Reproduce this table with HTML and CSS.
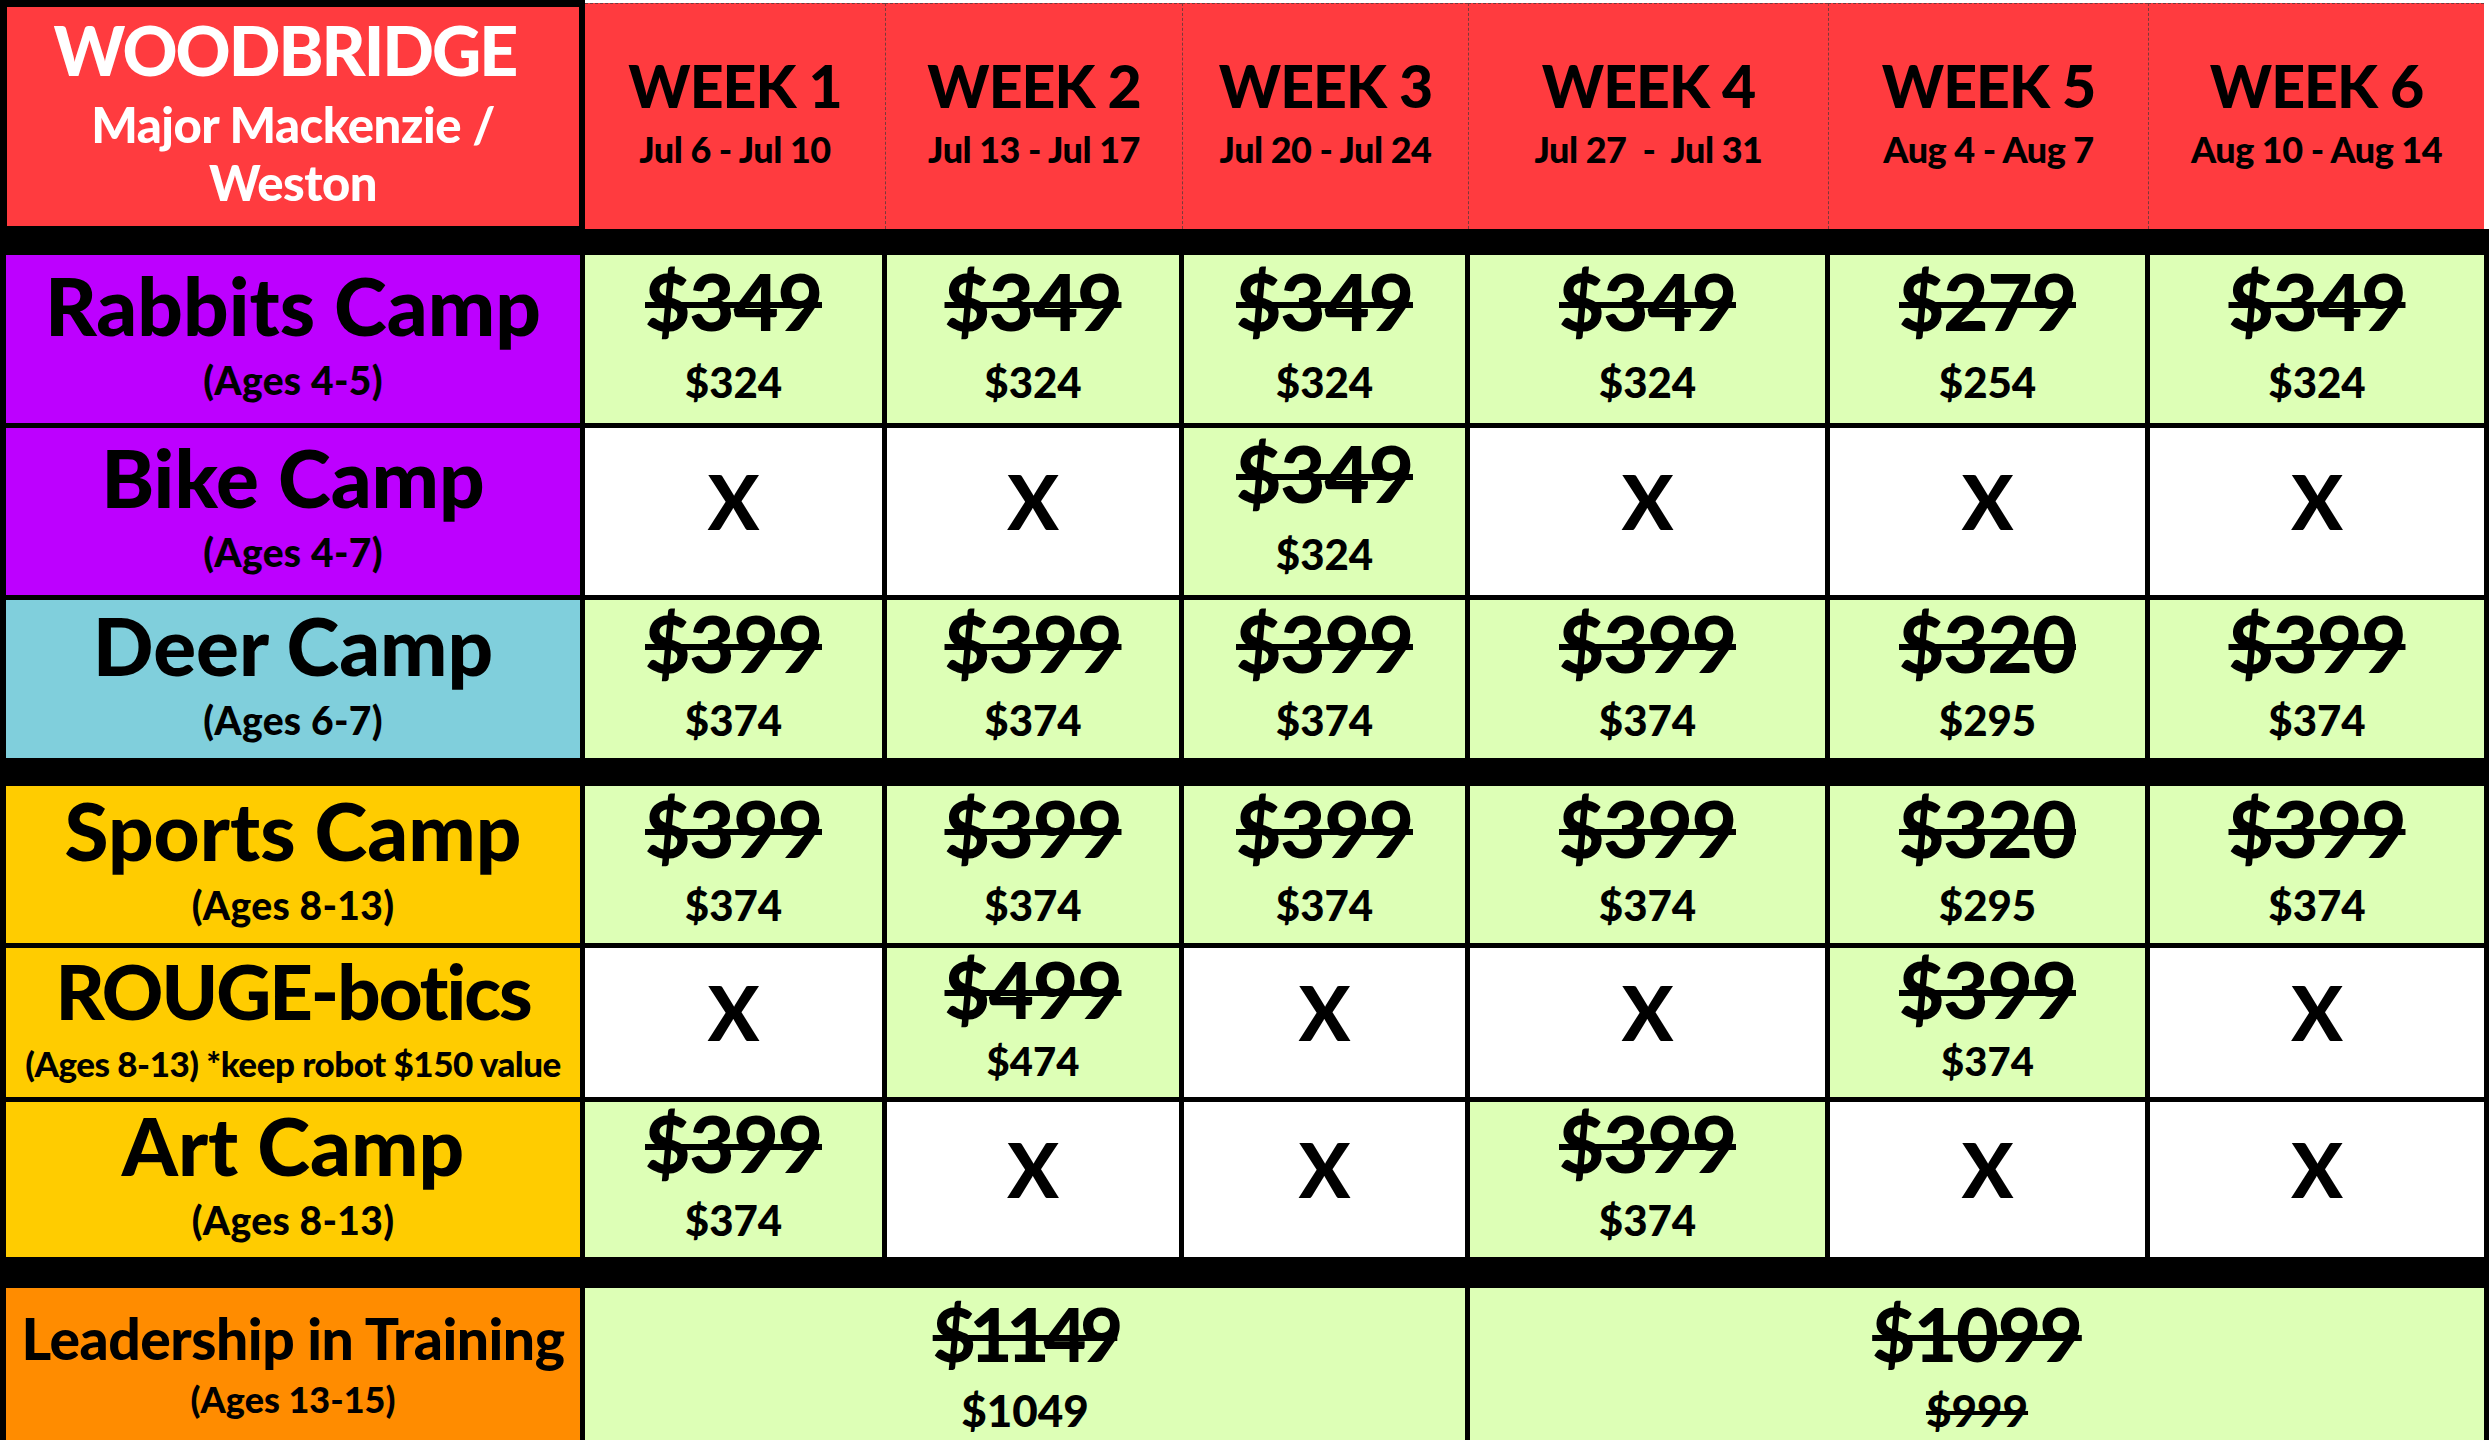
FILE: index.html
```html
<!DOCTYPE html>
<html>
<head>
<meta charset="utf-8">
<link rel="stylesheet" href="styles.css">
</head>
<body>
<div class="sheet">
  <div class="head">
    <div class="corner">
      <div class="corner-in">
        <div class="city">WOODBRIDGE</div>
        <div class="loc first">Major Mackenzie /</div>
        <div class="loc">Weston</div>
      </div>
    </div>
    <div class="wk first"><div class="wk-t">WEEK 1</div><div class="wk-d">Jul 6 - Jul 10</div></div>
    <div class="wk"><div class="wk-t">WEEK 2</div><div class="wk-d">Jul 13 - Jul 17</div></div>
    <div class="wk"><div class="wk-t">WEEK 3</div><div class="wk-d">Jul 20 - Jul 24</div></div>
    <div class="wk"><div class="wk-t">WEEK 4</div><div class="wk-d">Jul 27&nbsp; - &nbsp;Jul 31</div></div>
    <div class="wk"><div class="wk-t">WEEK 5</div><div class="wk-d">Aug 4 - Aug 7</div></div>
    <div class="wk"><div class="wk-t">WEEK 6</div><div class="wk-d">Aug 10 - Aug 14</div></div>
  </div>

  <div class="band b1"></div>

  <div class="grid g1">
    <div class="lbl purple"><div class="name">Rabbits Camp</div><div class="ages">(Ages 4-5)</div></div>
    <div class="c on tall"><div class="old">$349</div><div class="new">$324</div></div>
    <div class="c on tall"><div class="old">$349</div><div class="new">$324</div></div>
    <div class="c on tall"><div class="old">$349</div><div class="new">$324</div></div>
    <div class="c on tall"><div class="old">$349</div><div class="new">$324</div></div>
    <div class="c on tall"><div class="old">$279</div><div class="new">$254</div></div>
    <div class="c on tall"><div class="old">$349</div><div class="new">$324</div></div>

    <div class="lbl purple"><div class="name">Bike Camp</div><div class="ages">(Ages 4-7)</div></div>
    <div class="c off"><div class="x">X</div></div>
    <div class="c off"><div class="x">X</div></div>
    <div class="c on tall"><div class="old">$349</div><div class="new">$324</div></div>
    <div class="c off"><div class="x">X</div></div>
    <div class="c off"><div class="x">X</div></div>
    <div class="c off"><div class="x">X</div></div>

    <div class="lbl blue"><div class="name">Deer Camp</div><div class="ages">(Ages 6-7)</div></div>
    <div class="c on"><div class="old">$399</div><div class="new">$374</div></div>
    <div class="c on"><div class="old">$399</div><div class="new">$374</div></div>
    <div class="c on"><div class="old">$399</div><div class="new">$374</div></div>
    <div class="c on"><div class="old">$399</div><div class="new">$374</div></div>
    <div class="c on"><div class="old">$320</div><div class="new">$295</div></div>
    <div class="c on"><div class="old">$399</div><div class="new">$374</div></div>
  </div>

  <div class="band b2"></div>

  <div class="grid g2">
    <div class="lbl yellow"><div class="name">Sports Camp</div><div class="ages">(Ages 8-13)</div></div>
    <div class="c on"><div class="old">$399</div><div class="new">$374</div></div>
    <div class="c on"><div class="old">$399</div><div class="new">$374</div></div>
    <div class="c on"><div class="old">$399</div><div class="new">$374</div></div>
    <div class="c on"><div class="old">$399</div><div class="new">$374</div></div>
    <div class="c on"><div class="old">$320</div><div class="new">$295</div></div>
    <div class="c on"><div class="old">$399</div><div class="new">$374</div></div>

    <div class="lbl yellow"><div class="name robo">ROUGE-botics</div><div class="ages small">(Ages 8-13) *keep robot $150 value</div></div>
    <div class="c off"><div class="x">X</div></div>
    <div class="c on tight"><div class="old">$499</div><div class="new">$474</div></div>
    <div class="c off"><div class="x">X</div></div>
    <div class="c off"><div class="x">X</div></div>
    <div class="c on tight"><div class="old">$399</div><div class="new">$374</div></div>
    <div class="c off"><div class="x">X</div></div>

    <div class="lbl yellow"><div class="name">Art Camp</div><div class="ages">(Ages 8-13)</div></div>
    <div class="c on"><div class="old">$399</div><div class="new">$374</div></div>
    <div class="c off"><div class="x">X</div></div>
    <div class="c off"><div class="x">X</div></div>
    <div class="c on"><div class="old">$399</div><div class="new">$374</div></div>
    <div class="c off"><div class="x">X</div></div>
    <div class="c off"><div class="x">X</div></div>
  </div>

  <div class="band b3"></div>

  <div class="grid g3">
    <div class="lbl orange"><div class="name lit">Leadership in Training</div><div class="ages lit-ages">(Ages 13-15)</div></div>
    <div class="c on span3"><div class="old big ones">$1149</div><div class="new big">$1049</div></div>
    <div class="c on span3"><div class="old big">$1099</div><div class="new big struck">$999</div></div>
  </div>
</div>
</body>
</html>
```

FILE: styles.css
```css
html, body {
  margin: 0;
  padding: 0;
  background: #ffffff;
  overflow: hidden;
}

body {
  width: 2492px;
  height: 1440px;
  font-family: "Lato", "Noto Sans", "DejaVu Sans", sans-serif;
  font-weight: 900;
  color: #000;
}

.sheet {
  width: 2489px;
}

/* ---------- header ---------- */
.head {
  display: grid;
  grid-template-columns: 585px 300px 297px 286px 360px 320px 336px;
  height: 229px;
}

.corner {
  background: #000;
  padding: 7px 6px 3px 7px;
}

.corner-in {
  height: 100%;
  background: #ff3b3f;
  color: #fff;
  display: flex;
  flex-direction: column;
  align-items: center;
  padding-top: 8px;
  box-sizing: border-box;
}

.city {
  font-size: 68px;
  line-height: 70px;
  letter-spacing: -2px;
  margin-right: 16px;
}

.loc {
  font-size: 49px;
  line-height: 58px;
  letter-spacing: -0.5px;
}

.loc.first {
  margin-top: 10px;
}

.wk {
  margin-top: 3px;
  background: #ff3b3f;
  border-top: 1px dashed #7a3a3a;
  border-left: 1px dashed #7a3a3a;
  display: flex;
  flex-direction: column;
  align-items: center;
  justify-content: center;
  padding-bottom: 10px;
}

.wk.first {
  border-left: none;
}

.wk-t {
  font-size: 59px;
  line-height: 60px;
  letter-spacing: -1px;
}

.wk-d {
  font-size: 36px;
  line-height: 36px;
  margin-top: 15px;
  letter-spacing: -0.5px;
}

/* ---------- bands ---------- */
.band {
  background: #000;
}
.b1 { height: 26px; }
.b2 { height: 28px; }
.b3 { height: 31px; }

/* ---------- body grids ---------- */
.grid {
  display: grid;
  grid-template-columns: 574px 297px 292px 281px 355px 315px 334px;
  column-gap: 5px;
  row-gap: 5px;
  background: #000;
  padding: 0 5px 0 6px;
}

.g1 { grid-template-rows: 168px 167px 158px; }
.g2 { grid-template-rows: 157px 149px 155px; }
.g3 { grid-template-rows: 166px; }

.lbl, .c {
  display: flex;
  flex-direction: column;
  align-items: center;
  justify-content: center;
  text-align: center;
  padding-bottom: 14px;
  box-sizing: border-box;
}

.purple { background: #bd00ff; }
.blue { background: #80cfdc; }
.yellow { background: #ffcc00; }
.orange { background: #ff8c00; }

.on { background: #ddffb6; }
.off { background: #ffffff; }

.span3 { grid-column: span 3; }

.name {
  font-size: 80px;
  line-height: 78px;
  letter-spacing: 0;
  white-space: nowrap;
}

.name.robo {
  font-size: 76px;
  letter-spacing: -2px;
}

.name.lit {
  font-size: 57px;
  line-height: 56px;
  letter-spacing: -0.5px;
}

.ages {
  font-size: 39px;
  line-height: 38px;
  margin-top: 17px;
  letter-spacing: 0.3px;
  white-space: nowrap;
}

.ages.lit-ages {
  font-size: 36px;
  margin-top: 14px;
  letter-spacing: 0;
}

.ages.small {
  font-size: 35px;
  line-height: 34px;
  letter-spacing: -0.5px;
  margin-top: 16px;
}

.old {
  font-size: 78px;
  line-height: 78px;
  letter-spacing: -1px;
  text-decoration: line-through;
  text-decoration-thickness: 6px;
}

.new {
  font-size: 42px;
  line-height: 42px;
  margin-top: 17px;
}

.tall .new {
  margin-top: 21px;
}

.tight .new {
  font-size: 40px;
  line-height: 40px;
  margin-top: 13px;
}

.old.big {
  font-size: 74px;
  line-height: 74px;
}

.old.big.ones {
  letter-spacing: -6px;
}

.new.big {
  font-size: 44px;
  line-height: 44px;
  margin-top: 17px;
}

.new.struck {
  text-decoration: line-through;
  text-decoration-thickness: 4px;
}

.x {
  font-size: 76px;
  line-height: 76px;
  margin-top: -8px;
}
```
